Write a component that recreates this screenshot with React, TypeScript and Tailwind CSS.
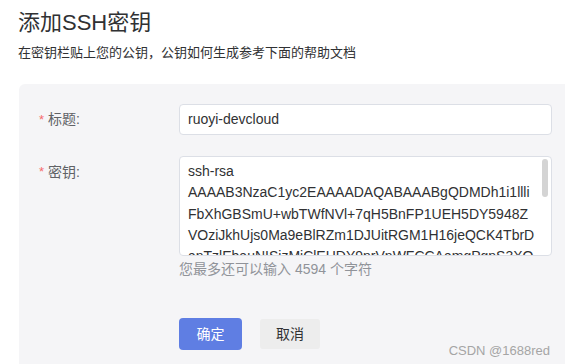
import React from 'react';

const FONT = { fontFamily: '"Liberation Sans", Arial, "Noto Sans CJK SC", sans-serif' };

const keyLines = [
  'ssh-rsa',
  'AAAAB3NzaC1yc2EAAAADAQABAAABgQDMDh1i1llli',
  'FbXhGBSmU+wbTWfNVl+7qH5BnFP1UEH5DY5948Z',
  'VOziJkhUjs0Ma9eBlRZm1DJUitRGM1H16jeQCK4TbrD',
  'anTzlEbauNISizMjClEHDY9nrVnWFCCAamgPgnS3XO',
];

export default function App() {
  return (
    <div className="w-[565px] h-[364px] bg-white overflow-hidden relative" style={FONT}>
      <div className="pl-[18px] pt-[9px]">
        <h1 className="text-[22px] leading-[28px] text-[#303133]">添加SSH密钥</h1>
        <p className="text-[13px] leading-[18px] mt-[7px] text-[#303133]">
          在密钥栏贴上您的公钥，公钥如何生成参考下面的帮助文档
        </p>
      </div>

      <div className="ml-[19px] mt-[22px] h-[300px] bg-[#f5f5f7] rounded-tl-[6px] pt-[20px]">
        {/* title row */}
        <div className="flex">
          <div className="w-[160px] shrink-0 pl-[20px] h-[31px] flex items-center text-[14px] text-[#606266]">
            <span className="text-[#f56c6c] mr-[4px] text-[13px]">*</span>标题:
          </div>
          <div className="w-[373px] h-[31px] bg-white border border-[#dcdfe6] rounded-[4px] px-[8px] flex items-center text-[14px] text-[#303133]">
            ruoyi-devcloud
          </div>
        </div>

        {/* key row */}
        <div className="flex mt-[21px]">
          <div className="w-[160px] shrink-0 pl-[20px] h-[31px] flex items-start pt-[6px] text-[14px] text-[#606266]">
            <span className="text-[#f56c6c] mr-[4px] text-[13px]">*</span>密钥:
          </div>
          <div>
            <div className="relative w-[373px] h-[100px] bg-white border border-[#dcdfe6] rounded-[4px] overflow-hidden pl-[8px] pt-[4px] text-[14px] leading-[21.3px] text-[#303133]">
              {keyLines.map((l) => (
                <div key={l} className="whitespace-nowrap">{l}</div>
              ))}
              <div className="absolute right-[3px] top-[2px] w-[6px] h-[38px] rounded-[3px] bg-[#d4d4d4]" />
            </div>
            <div className="mt-[5px] text-[14px] leading-[17px] text-[#909399]">
              您最多还可以输入 4594 个字符
            </div>
          </div>
        </div>

        {/* buttons */}
        <div className="flex items-center mt-[40px] pl-[160px] gap-[18px]">
          <button className="w-[63px] h-[32px] rounded-[4px] bg-[#5f7ee3] text-white text-[14px]">确定</button>
          <button className="w-[60px] h-[30px] rounded-[3px] bg-[#ededed] text-[#303133] text-[14px]">取消</button>
        </div>
      </div>

      <div className="absolute right-[15px] bottom-[4px] text-[13px] text-[#a5a5a5]">CSDN @1688red</div>
    </div>
  );
}
